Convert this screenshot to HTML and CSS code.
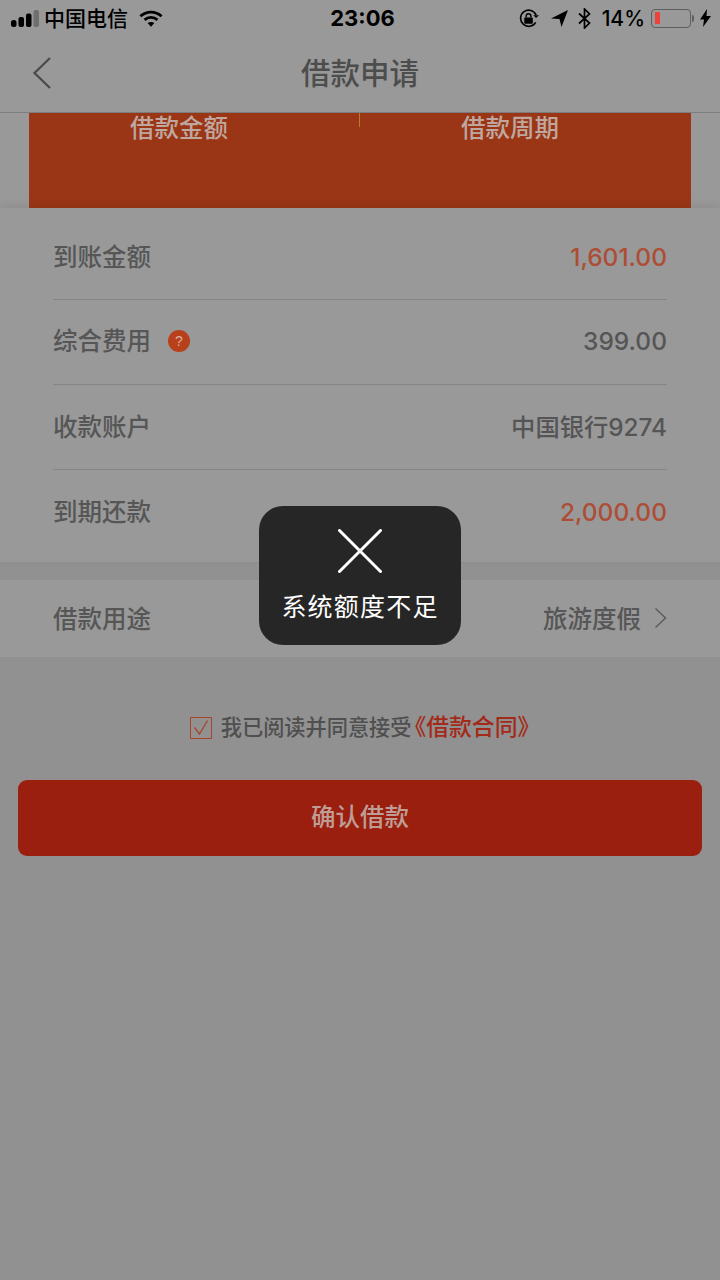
FILE: index.html
```html
<!DOCTYPE html>
<html lang="zh">
<head>
<meta charset="utf-8">
<title>借款申请</title>
<link rel="stylesheet" href="styles.css">
</head>
<body>
<div class="page">
  <header class="top">
    <div class="status">
      <div class="status-left">
        <svg class="signal" width="28" height="17" viewBox="0 0 28 17"><rect x="0" y="10" width="5.500" height="7" rx="2.500" fill="#000"/><rect x="7.500" y="7" width="5.500" height="10" rx="2" fill="#000"/><rect x="15" y="3.500" width="5.500" height="13.500" rx="2" fill="#000"/><rect x="22.500" y="0" width="5.500" height="17" rx="2" fill="#6f6f6f"/></svg>
        <span class="carrier">中国电信</span>
        <svg class="wifi" width="24" height="17" viewBox="0 0 26 18"><path d="M1.500 6.500C8 .5 18 .5 24.500 6.500" fill="none" stroke="#000" stroke-width="3"/><path d="M6 10.500C10 7 16 7 20 10.500" fill="none" stroke="#000" stroke-width="3"/><path d="M9.300 14C11.500 12.300 14.500 12.300 16.700 14L13 18Z" fill="#000"/></svg>
      </div>
      <div class="clock">23:06</div>
      <div class="status-right">
        <svg width="20" height="19" viewBox="0 0 21 20"><path d="M18 6.500A8.500 8.500 0 1 0 17.500 14" fill="none" stroke="#000" stroke-width="1.700"/><path d="M15 6.500h6l-3 3z" fill="#000"/><rect x="5.500" y="9" width="9" height="6.500" rx="1" fill="#000"/><path d="M7.500 9V7.500a2.500 2.500 0 0 1 5 0V9" fill="none" stroke="#000" stroke-width="1.500"/></svg>
        <svg class="arrow" width="17" height="17" viewBox="0 0 17 17"><path d="M0 8.500L17 0 10.500 17 8.500 9Z" fill="#000"/></svg>
        <svg class="bt" width="13" height="21" viewBox="0 0 13 21"><path d="M1 5.500L11.500 15 6.500 20V1L11.500 6 1 15.500" fill="none" stroke="#000" stroke-width="1.700"/></svg>
        <span class="battery-text">14%</span>
        <span class="battery"><span class="battery-fill"></span></span>
        <span class="battery-tip"></span>
        <svg class="bolt" width="11" height="18" viewBox="0 0 11 18"><path d="M7 0L0 10.500h4L3 18l8-11H6.500Z" fill="#000"/></svg>
      </div>
    </div>
    <nav class="nav">
      <svg class="back" width="20" height="34" viewBox="0 0 20 34"><path d="M18 2L2.500 17 18 32" fill="none" stroke="#4a4a4a" stroke-width="2.200"/></svg>
      <h1 class="title">借款申请</h1>
    </nav>
  </header>

  <section class="banner-wrap">
    <div class="banner">
      <div class="banner-col">借款金额</div>
      <div class="banner-col">借款周期</div>
      <span class="banner-tick"></span>
    </div>
  </section>

  <section class="details">
    <div class="row"><span>到账金额</span><span class="num red">1,601.00</span></div>
    <div class="row"><span class="label-help">综合费用<i class="help">?</i></span><span class="num">399.00</span></div>
    <div class="row"><span>收款账户</span><span class="num account">中国银行9274</span></div>
    <div class="row"><span>到期还款</span><span class="num red">2,000.00</span></div>
  </section>

  <section class="purpose">
    <span>借款用途</span>
    <span class="purpose-value">旅游度假
      <svg width="13" height="22" viewBox="0 0 13 22"><path d="M1.500 1.500L11.500 11 1.500 20.500" fill="none" stroke="#5a5a5a" stroke-width="1.400"/></svg>
    </span>
  </section>

  <div class="agree">
    <svg width="22" height="22" viewBox="0 0 22 22"><rect x=".5" y=".5" width="21" height="21" fill="none" stroke="#a8452c"/><path d="M4.500 10.500L9.500 17 17.500 3.500" fill="none" stroke="#a8452c" stroke-width="1.300"/></svg>
    <span>我已阅读并同意接受</span><span class="contract">《借款合同》</span>
  </div>

  <button class="confirm" type="button">确认借款</button>

  <div class="toast">
    <svg width="44" height="44" viewBox="0 0 44 44"><path d="M1.500 1.500L42.500 42.500M42.500 1.500L1.500 42.500" stroke="#fff" stroke-width="3" stroke-linecap="round"/></svg>
    <span class="toast-text">系统额度不足</span>
  </div>
</div>
</body>
</html>
```

FILE: styles.css
```css
* { box-sizing: border-box; }
html, body { margin: 0; padding: 0; }
body {
  width: 720px;
  height: 1280px;
  overflow: hidden;
  background: #919191;
  font-family: "Noto Sans CJK SC", "Noto Sans", sans-serif;
  color: #4d4d4d;
}
.page { position: relative; width: 720px; height: 1280px; background: #919191; }

.top { background: #999999; height: 113px; border-bottom: 1px solid #7d7d7d; }
.status {
  height: 36px;
  display: flex;
  justify-content: space-between;
  align-items: center;
  position: relative;
  padding: 0 9px 0 11px;
  color: #000;
}
.status-left, .status-right { display: flex; align-items: center; }
.carrier { font-size: 21px; font-weight: 500; line-height: 30px; margin-left: 5px; margin-bottom: 3px; }
.wifi { margin-left: 11px; }
.clock {
  position: absolute;
  left: 0;
  right: 0;
  padding-left: 5px;
  text-align: center;
  font: 700 22px "Inter", sans-serif;
}
.status-right svg { display: block; }
.arrow { margin-left: 12px; }
.bt { margin-left: 10px; }
.battery-text { font: 500 21px "Inter", sans-serif; margin-left: 11px; }
.battery {
  margin-left: 6px;
  width: 40px;
  height: 19px;
  border: 1.500px solid #5e5e5e;
  border-radius: 4px;
  padding: 2.500px 3px;
}
.battery-fill { display: block; width: 5px; height: 100%; background: #f0403a; border-radius: 1px; }
.battery-tip { width: 2px; height: 7px; margin-left: 1px; background: #5e5e5e; border-radius: 0 2px 2px 0; }
.bolt { margin-left: 6px; }

.nav {
  height: 76px;
  display: flex;
  align-items: center;
  justify-content: center;
  position: relative;
  padding-bottom: 6px;
}
.back { position: absolute; left: 32px; top: 20px; }
.title { margin: 0; font-size: 29.500px; font-weight: 500; color: #4d4d4d; }

.banner-wrap { height: 95px; padding: 0 29px; background: #999999; }
.banner {
  position: relative;
  height: 95px;
  background: #9a3616;
  display: flex;
  color: #bfa79f;
  font-size: 24.500px;
  font-weight: 500;
  line-height: 28px;
}
.banner-col { width: 50%; padding-right: 31px; text-align: center; }
.banner-tick { position: absolute; left: 330px; top: 0; width: 1px; height: 14px; background: #b5801c; }

.details {
  position: relative;
  background: #999999;
  padding: 0 53px;
  height: 354px;
  box-shadow: 0 -3px 8px rgba(0, 0, 0, .07);
}
.row {
  display: flex;
  justify-content: space-between;
  align-items: center;
  font-size: 24.500px;
  font-weight: 500;
  color: #565656;
  border-bottom: 1px solid #858585;
}
.row:nth-child(1) { height: 92px; padding-top: 4px; }
.row:nth-child(2) { height: 85px; padding-bottom: 5px; }
.row:nth-child(3) { height: 85px; padding-bottom: 4px; }
.row:nth-child(4) { height: 92px; padding-bottom: 12px; border-bottom: 0; }
.num {
  font-family: "Inter", "Noto Sans CJK SC", sans-serif;
  font-weight: 500;
  font-size: 24.500px;
  color: #555555;
  margin-top: 2px;
}
.red { color: #ad4d35; margin-top: 3px; }
.account { margin-top: 0; font-size: 24.300px; }
.label-help { display: flex; align-items: center; }
.help {
  width: 22px;
  height: 22px;
  margin-left: 17px;
  margin-top: 2px;
  border-radius: 50%;
  background: #b8401b;
  color: #d8b0a0;
  font: 400 14px/22px "Liberation Sans", sans-serif;
  text-align: center;
}

.purpose {
  margin-top: 18px;
  height: 77px;
  background: #999999;
  padding: 0 53px 2px;
  display: flex;
  align-items: center;
  justify-content: space-between;
  font-size: 24.500px;
  font-weight: 500;
  color: #565656;
}
.purpose-value { display: flex; align-items: center; gap: 13px; }

.agree {
  margin-top: 52px;
  height: 32px;
  padding-left: 10px;
  display: flex;
  align-items: center;
  justify-content: center;
  font-size: 21.200px;
  font-weight: 500;
  color: #4f4f4f;
}
.agree svg { margin-right: 9px; margin-top: 6px; }
.contract { color: #a32a18; font-size: 22.800px; margin-left: -8px; }

.confirm {
  display: block;
  margin: 39px 18px 0;
  width: 684px;
  height: 76px;
  padding: 0 0 5px;
  border: 0;
  border-radius: 9px;
  background: #9a1f0e;
  color: #bf9d95;
  font-family: inherit;
  font-size: 24.500px;
  font-weight: 500;
}

.toast {
  position: absolute;
  left: 259px;
  top: 506px;
  width: 202px;
  height: 139px;
  border-radius: 24px;
  background: #262626;
  display: flex;
  flex-direction: column;
  align-items: center;
  padding-top: 23px;
  color: #fff;
}
.toast-text { font-size: 25px; font-weight: 400; line-height: 34px; margin-top: 15px; white-space: nowrap; letter-spacing: 1.200px; }
```
